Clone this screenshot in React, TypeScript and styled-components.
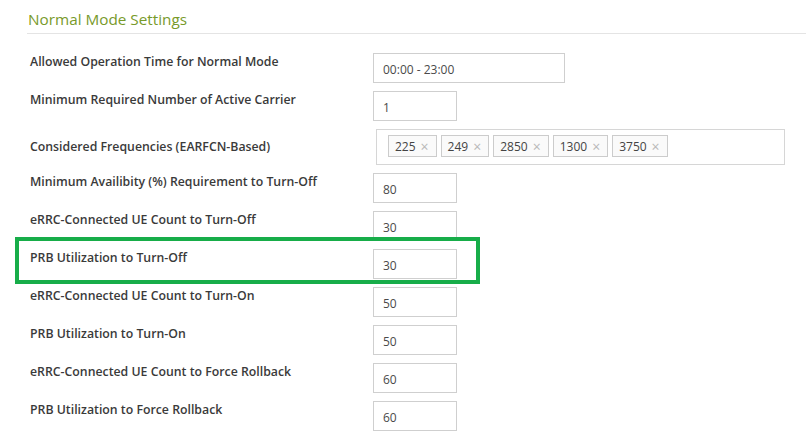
import React from "react";
import styled, { createGlobalStyle } from "styled-components";

const GlobalStyle = createGlobalStyle`
  html, body {
    margin: 0;
    padding: 0;
    background: #ffffff;
  }
  body {
    font-family: "Open Sans", "Noto Sans", sans-serif;
  }
`;

const Page = styled.div`
  width: 806px;
  height: 445px;
  overflow: hidden;
  background: #ffffff;
  padding-left: 27px;
  box-sizing: border-box;
`;

const SectionHeader = styled.div`
  border-bottom: 1px solid #e4e4e4;
  padding: 10px 0 4px 1px;
  margin-bottom: 19px;
`;

const SectionTitle = styled.h3`
  margin: 0;
  font-family: "Open Sans", "Noto Sans", sans-serif;
  font-weight: 400;
  font-size: 15.3px;
  line-height: 19px;
  color: #789a2a;
`;

const Form = styled.div`
  display: flex;
  flex-direction: column;
  gap: 8px;
  padding-left: 3px;
`;

const Row = styled.div`
  position: relative;
  display: grid;
  grid-template-columns: 343px auto;
  align-items: start;
`;

const Label = styled.label<{ $centered?: boolean }>`
  font-family: "Open Sans", "Noto Sans", sans-serif;
  font-weight: 600;
  font-size: 12.3px;
  line-height: 16px;
  color: #3a3a3a;
  padding-top: ${(p) => (p.$centered ? "10px" : "1px")};
  white-space: nowrap;
`;

const Input = styled.div<{ $wide?: boolean }>`
  box-sizing: border-box;
  width: ${(p) => (p.$wide ? "192px" : "84px")};
  height: 30px;
  border: 1px solid #cfcfcf;
  background: #ffffff;
  display: flex;
  align-items: center;
  padding: 2px 0 0 9px;
  font-family: "Open Sans", "Noto Sans", sans-serif;
  font-size: 12px;
  color: #4a4a4a;
`;

const TagBox = styled.div`
  box-sizing: border-box;
  margin-left: 3px;
  width: 409px;
  height: 36px;
  border: 1px solid #d6d6d6;
  background: #ffffff;
  display: flex;
  align-items: flex-start;
  gap: 4px;
  padding: 5px 0 0 11px;
`;

const Tag = styled.span`
  box-sizing: border-box;
  height: 22px;
  display: inline-flex;
  align-items: center;
  gap: 5px;
  padding: 1px 7px 0 6px;
  border: 1px solid #cccccc;
  background: #fafafa;
  font-family: "Open Sans", "Noto Sans", sans-serif;
  font-size: 12px;
  color: #444444;
`;

const TagRemove = styled.span`
  font-size: 14px;
  line-height: 1;
  color: #b8b8b8;
`;

const Highlight = styled.div`
  position: absolute;
  left: -15px;
  top: -12px;
  width: 465px;
  height: 47px;
  box-sizing: border-box;
  border: 4px solid #17ad49;
  pointer-events: none;
`;

type Field = { label: string; value: string; wide?: boolean; marked?: boolean };

const before: Field[] = [
  { label: "Allowed Operation Time for Normal Mode", value: "00:00 - 23:00", wide: true },
  { label: "Minimum Required Number of Active Carrier", value: "1" },
];

const after: Field[] = [
  { label: "Minimum Availibity (%) Requirement to Turn-Off", value: "80" },
  { label: "eRRC-Connected UE Count to Turn-Off", value: "30" },
  { label: "PRB Utilization to Turn-Off", value: "30", marked: true },
  { label: "eRRC-Connected UE Count to Turn-On", value: "50" },
  { label: "PRB Utilization to Turn-On", value: "50" },
  { label: "eRRC-Connected UE Count to Force Rollback", value: "60" },
  { label: "PRB Utilization to Force Rollback", value: "60" },
];

const frequencies = ["225", "249", "2850", "1300", "3750"];

const FieldRow = ({ f }: { f: Field }) => (
  <Row>
    <Label>{f.label}</Label>
    <Input $wide={f.wide}>{f.value}</Input>
    {f.marked && <Highlight />}
  </Row>
);

export default function App() {
  return (
    <>
      <GlobalStyle />
      <Page>
        <SectionHeader>
          <SectionTitle>Normal Mode Settings</SectionTitle>
        </SectionHeader>
        <Form>
          {before.map((f) => (
            <FieldRow key={f.label} f={f} />
          ))}
          <Row>
            <Label $centered>Considered Frequencies (EARFCN-Based)</Label>
            <TagBox>
              {frequencies.map((v) => (
                <Tag key={v}>
                  {v}
                  <TagRemove>×</TagRemove>
                </Tag>
              ))}
            </TagBox>
          </Row>
          {after.map((f) => (
            <FieldRow key={f.label} f={f} />
          ))}
        </Form>
      </Page>
    </>
  );
}
